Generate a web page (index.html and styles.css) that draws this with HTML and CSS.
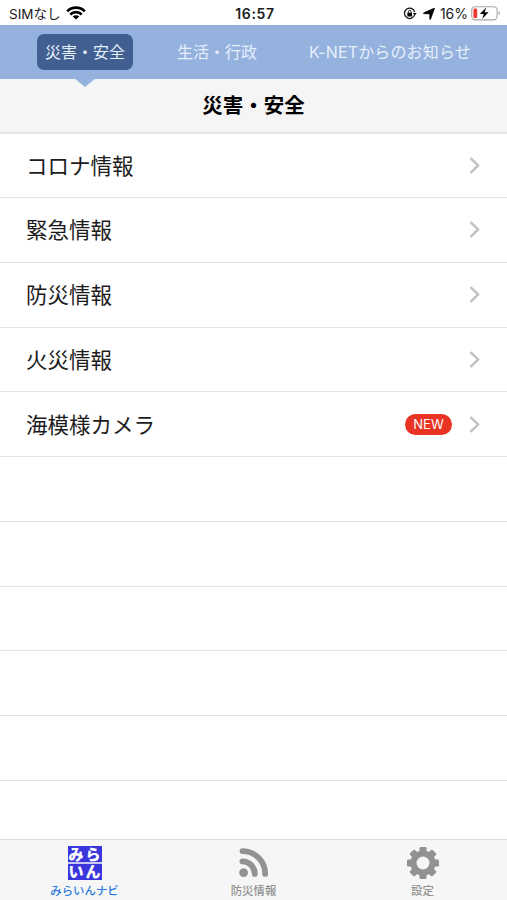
FILE: index.html
```
<!DOCTYPE html>
<html lang="ja">
<head>
  <meta charset="UTF-8">
  <meta name="viewport" content="width=device-width, initial-scale=1.0">
  <title>災害・安全</title>
  <link rel="stylesheet" href="styles.css">
</head>
<body>

  <!-- Status bar -->
  <div class="status-bar">
    <div class="status-left">
      <span class="carrier">SIMなし</span>
      <svg class="wifi" width="20" height="14" viewBox="0 0 20 14">
        <g fill="none" stroke="#000" stroke-width="2.6">
          <path d="M1.2 5.3a12.3 12.3 0 0 1 17.6 0"/>
          <path d="M4.3 8.5a8 8 0 0 1 11.4 0"/>
        </g>
        <path d="M10 13.6L6.7 10.5a4.7 4.7 0 0 1 6.6 0z"/>
      </svg>
    </div>
    <span class="clock">16:57</span>
    <div class="status-right">
      <svg class="rotation" width="14" height="13" viewBox="0 0 14 13">
        <path d="M11.7 7.6A5.2 5.2 0 1 1 11.7 5" fill="none" stroke="#111" stroke-width="1.2"/>
        <path d="M9.9 5.9h3.7l-1.8 2.7z"/>
        <rect x="4.4" y="5.7" width="4.6" height="3.7" rx=".5"/>
        <path d="M5.3 6V4.8a1.4 1.4 0 0 1 2.8 0V6" fill="none" stroke="#111" stroke-width=".9"/>
      </svg>
      <svg class="location" width="12" height="12" viewBox="0 0 12 12">
        <path d="M11.5.6L7.6 11.2c-.2.5-.9.5-.9-.1V5.9L.9 5.7c-.6 0-.7-.7-.1-.9L10.9.2c.5-.2.8 0 .6.4z" stroke="#000" stroke-width=".6"/>
      </svg>
      <span class="percent">16%</span>
      <svg class="battery" width="30" height="15" viewBox="0 0 30 15">
        <rect x=".7" y=".7" width="25.4" height="13.2" rx="3.6" fill="none" stroke="#a9a5a5" stroke-width="1.1"/>
        <path d="M27.6 5v4.3c2-.9 2-3.4 0-4.3z" fill="#a9a5a5"/>
        <rect x="2.4" y="2.5" width="3.8" height="9.6" rx="1.3" fill="#f03a30"/>
        <path d="M15.3 1.4L8.8 8h4.1l-1.8 5L17.6 6.3h-4z" stroke="#fff" stroke-width="1.4" paint-order="stroke"/>
      </svg>
    </div>
  </div>

  <!-- Categories -->
  <nav class="categories">
    <a class="category active">災害・安全</a>
    <a class="category">生活・行政</a>
    <a class="category wide">K-NETからのお知らせ</a>
  </nav>

  <h1 class="page-title">災害・安全</h1>

  <ul class="menu">
    <li>コロナ情報<svg class="chevron" viewBox="0 0 11 17"><path d="M1.5 1.2l7.6 7.3-7.6 7.3"/></svg></li>
    <li>緊急情報<svg class="chevron" viewBox="0 0 11 17"><path d="M1.5 1.2l7.6 7.3-7.6 7.3"/></svg></li>
    <li>防災情報<svg class="chevron" viewBox="0 0 11 17"><path d="M1.5 1.2l7.6 7.3-7.6 7.3"/></svg></li>
    <li>火災情報<svg class="chevron" viewBox="0 0 11 17"><path d="M1.5 1.2l7.6 7.3-7.6 7.3"/></svg></li>
    <li>海模様カメラ<span class="new">NEW</span><svg class="chevron" viewBox="0 0 11 17"><path d="M1.5 1.2l7.6 7.3-7.6 7.3"/></svg></li>
    <li></li>
    <li></li>
    <li></li>
    <li></li>
    <li></li>
  </ul>

  <!-- Bottom tabs -->
  <footer class="tab-bar">
    <a class="tab selected">
      <div class="logo">
        <span>み</span><span>ら</span>
        <span>い</span><span>ん</span>
      </div>
      <span class="tab-label">みらいんナビ</span>
    </a>
    <a class="tab">
      <svg width="34" height="34" viewBox="0 0 34 34">
        <circle cx="6.6" cy="26.6" r="4.4" fill="#929292"/>
        <g fill="none" stroke="#929292" stroke-width="5.8" stroke-linecap="round">
          <path d="M5.5 15.4A12.5 12.5 0 0 1 17.8 27.9"/>
          <path d="M5.5 5.1A22.8 22.8 0 0 1 28.2 27.9"/>
        </g>
      </svg>
      <span class="tab-label">防災情報</span>
    </a>
    <a class="tab">
      <svg width="34" height="34" viewBox="0 0 34 34">
        <g fill="#929292">
          <rect x="13.5" y="1" width="7" height="32" rx="1.2"/>
          <rect x="13.5" y="1" width="7" height="32" rx="1.2" transform="rotate(45 17 17)"/>
          <rect x="13.5" y="1" width="7" height="32" rx="1.2" transform="rotate(90 17 17)"/>
          <rect x="13.5" y="1" width="7" height="32" rx="1.2" transform="rotate(135 17 17)"/>
          <circle cx="17" cy="17" r="12.6"/>
        </g>
        <circle cx="17" cy="17" r="6.5" fill="#f6f6f6"/>
      </svg>
      <span class="tab-label">設定</span>
    </a>
  </footer>

</body>
</html>
```
FILE: styles.css
```
* {
  box-sizing: border-box;
}

body {
  margin: 0;
  height: 900px;
  display: flex;
  flex-direction: column;
  overflow: hidden;
  background-color: #fff;
  color: #1c1c1c;
  font-family: Inter, "Noto Sans CJK JP", sans-serif;
}

/* status bar */
.status-bar {
  height: 25px;
  flex: none;
  display: grid;
  grid-template-columns: 1fr auto 1fr;
  align-items: center;
  padding: 2px 6px 0 9px;
  font-size: 14px;
  line-height: 20px;
}

.status-left,
.status-right {
  display: flex;
  align-items: center;
}

.status-right {
  justify-content: flex-end;
}

.carrier {
  font-size: 13.5px;
}

.wifi {
  margin-left: 6px;
  margin-top: -2px;
}

.clock {
  font-weight: 600;
  letter-spacing: 0.7px;
}

.location {
  margin-left: 6px;
}

.percent {
  margin-left: 5px;
  margin-right: 3px;
}

/* categories */
.categories {
  height: 54px;
  flex: none;
  display: flex;
  align-items: center;
  padding-left: 37px;
  background-color: #95b1dd;
}

.category {
  position: relative;
  height: 36px;
  padding: 0 8px;
  margin-right: 36px;
  border-radius: 7px;
  color: #e6effc;
  font-size: 16px;
  line-height: 36px;
  white-space: nowrap;
}

.category.wide {
  letter-spacing: 0.15px;
}

.category.active {
  background-color: #416091;
}

.category.active::after {
  content: "";
  position: absolute;
  top: 44px;
  left: 50%;
  margin-left: -11px;
  border: 11px solid transparent;
  border-top: 9px solid #95b1dd;
  border-bottom: 0;
}

.page-title {
  flex: none;
  height: 55px;
  margin: 0;
  border-bottom: 2px solid #e4e4e4;
  background-color: #f5f5f5;
  color: #000;
  text-align: center;
  font-size: 20.5px;
  line-height: 54px;
}

/* list */
.menu {
  flex: 1;
  min-height: 0;
  margin: 0;
  padding: 0;
  list-style: none;
}

.menu li {
  display: flex;
  align-items: center;
  height: 64.75px;
  padding: 0 27px 2px 26px;
  border-bottom: 1px solid #e3e3e3;
  font-size: 21.5px;
}

.menu li:first-child {
  height: 64px;
}

.chevron {
  width: 11px;
  height: 17px;
  margin-left: auto;
  margin-top: 2px;
  fill: none;
  stroke: #c0c0c0;
  stroke-width: 2.4;
}

.new {
  width: 47px;
  height: 21px;
  margin-left: auto;
  margin-top: 2px;
  border-radius: 11px;
  background-color: #e93323;
  color: #fff;
  font-size: 13px;
  line-height: 21px;
  text-align: center;
}

.new + .chevron {
  margin-left: 17px;
}

/* bottom tabs */
.tab-bar {
  flex: none;
  height: 61px;
  display: flex;
  border-top: 1px solid #dcdcdc;
  background-color: #f6f6f6;
}

.tab {
  flex: 1;
  display: flex;
  flex-direction: column;
  align-items: center;
  padding-top: 6px;
  color: #929292;
}

.tab-label {
  margin-top: 3px;
  font-size: 11.4px;
  font-weight: 500;
  line-height: 16px;
}

.selected {
  color: #2b7ce0;
}

.logo {
  width: 34px;
  height: 34px;
  display: grid;
  grid-template-columns: 1fr 1fr;
  grid-template-rows: 1fr 1fr;
  background: linear-gradient(#3a36dc 0 16px, #c9c9f5 16px 18px, #3a36dc 18px);
  color: #fff;
  font-size: 15px;
  font-weight: 900;
  line-height: 17px;
  text-align: center;
}
```
